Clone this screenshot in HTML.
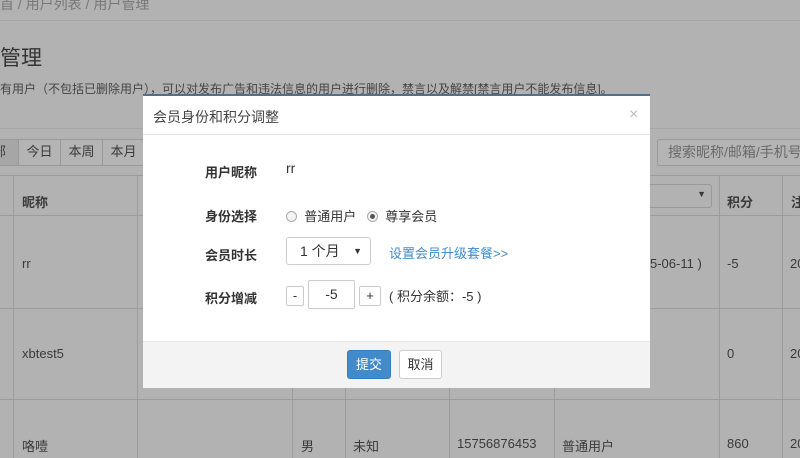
<!DOCTYPE html>
<html><head><meta charset="utf-8"><style>
*{margin:0;padding:0;box-sizing:border-box}
body{width:800px;height:458px;overflow:hidden;background:#b2b2b2;font-family:"Liberation Sans","Noto Sans CJK SC",sans-serif;font-size:13px;color:#3a3a3a;position:relative}
.a{position:absolute;white-space:nowrap}
.hl{position:absolute;height:1px;background:#9c9c9c}
.vl{position:absolute;width:1px;background:#9c9c9c}
.btn{position:absolute;border:1px solid #999;background:#b4b4b4;text-align:center;line-height:24px;font-size:13px}
.m{position:absolute;left:143px;top:94px;width:507px;height:294px;background:#fff;border-top:2px solid #52708e;color:#333}
.lb{position:absolute;font-weight:bold;font-size:12px;left:62px}
.r{display:inline-block;width:11px;height:11px;border:1px solid #aaa;border-radius:50%;background:#f4f4f4;vertical-align:-1px;position:relative}
</style></head><body>
<div class="a" style="left:0;top:-6px;font-size:14px;color:#777">首 / 用户列表 / 用户管理</div>
<div class="hl" style="left:0;top:20px;width:800px;background:#a5a5a5"></div>
<div class="a" style="left:0;top:42px;font-size:21px;color:#333">管理</div>
<div class="a" style="left:0;top:80px;font-size:12px;color:#444">有用户（不包括已删除用户），可以对发布广告和违法信息的用户进行删除，禁言以及解禁[禁言用户不能发布信息]。</div>
<div class="hl" style="left:0;top:128px;width:800px;background:#a5a5a5"></div>
<div class="btn" style="left:-20px;top:139px;width:39px;height:27px;background:#a6a6a6">部</div>
<div class="btn" style="left:18px;top:139px;width:43px;height:27px">今日</div>
<div class="btn" style="left:60px;top:139px;width:43px;height:27px">本周</div>
<div class="btn" style="left:102px;top:139px;width:43px;height:27px">本月</div>
<div class="btn" style="left:657px;top:139px;width:160px;height:27px;border-radius:3px;text-align:left;padding-left:10px;color:#6a6a6a;font-size:14px">搜索昵称/邮箱/手机号</div>
<div class="hl" style="left:0;top:175px;width:800px"></div>
<div class="hl" style="left:0;top:215px;width:800px"></div>
<div class="hl" style="left:0;top:308px;width:800px"></div>
<div class="hl" style="left:0;top:399px;width:800px"></div>
<div class="vl" style="left:13px;top:175px;height:283px"></div>
<div class="vl" style="left:137px;top:175px;height:283px"></div>
<div class="vl" style="left:292px;top:388px;height:70px"></div>
<div class="vl" style="left:345px;top:388px;height:70px"></div>
<div class="vl" style="left:449px;top:388px;height:70px"></div>
<div class="vl" style="left:554px;top:388px;height:70px"></div>
<div class="vl" style="left:719px;top:175px;height:283px"></div>
<div class="vl" style="left:782px;top:175px;height:283px"></div>
<div class="a" style="left:22px;top:192px;font-weight:bold">昵称</div>
<div class="a" style="left:727px;top:192px;font-weight:bold">积分</div>
<div class="a" style="left:791px;top:192px;font-weight:bold">注</div>
<div class="a" style="left:640px;top:184px;width:72px;height:24px;border:1px solid #999;border-radius:3px;font-size:9px;text-align:right;padding-right:5px;line-height:18px">▼</div>
<div class="a" style="left:22px;top:256px">rr</div>
<div class="a" style="left:650px;top:256px;font-size:13px">5-06-11 )</div>
<div class="a" style="left:727px;top:256px">-5</div>
<div class="a" style="left:790px;top:256px">20</div>
<div class="a" style="left:22px;top:346px">xbtest5</div>
<div class="a" style="left:727px;top:346px">0</div>
<div class="a" style="left:790px;top:346px">20</div>
<div class="a" style="left:22px;top:436px">咯噎</div>
<div class="a" style="left:301px;top:436px">男</div>
<div class="a" style="left:353px;top:436px">未知</div>
<div class="a" style="left:457px;top:436px">15756876453</div>
<div class="a" style="left:562px;top:436px">普通用户</div>
<div class="a" style="left:727px;top:436px">860</div>
<div class="a" style="left:790px;top:436px">20</div>

<div class="m">
<div class="a" style="left:10px;top:11px;font-size:14px;color:#444">会员身份和积分调整</div>
<div class="a" style="left:486px;top:10px;font-size:16px;color:#bbb">×</div>
<div class="hl" style="left:0;top:38px;width:507px;background:#e5e5e5"></div>
<div class="lb" style="top:66px;font-size:13px">用户昵称</div>
<div class="a" style="left:143px;top:64px;font-size:14px">rr</div>
<div class="lb" style="top:110px;font-size:13px">身份选择</div>
<div class="a" style="left:143px;top:110px;font-size:13px"><span class="r"></span>&nbsp; 普通用户 &nbsp;&nbsp;<span class="r"><span style="position:absolute;left:2px;top:2px;width:5px;height:5px;border-radius:50%;background:#555"></span></span>&nbsp; 尊享会员</div>
<div class="lb" style="top:149px;font-size:13px">会员时长</div>
<div class="a" style="left:143px;top:141px;width:85px;height:28px;border:1px solid #ccc;border-radius:3px;padding-left:13px;line-height:26px;font-size:14px">1 个月<span style="position:absolute;right:8px;top:0;font-size:9px">▼</span></div>
<div class="a" style="left:246px;top:147px;color:#428bca;font-size:13px">设置会员升级套餐&gt;&gt;</div>
<div class="lb" style="top:192px;font-size:13px">积分增减</div>
<div class="a" style="left:143px;top:190px;width:18px;height:20px;border:1px solid #ccc;border-radius:2px;text-align:center;line-height:18px">-</div>
<div class="a" style="left:165px;top:184px;width:47px;height:29px;border:1px solid #ccc;border-radius:2px;text-align:center;line-height:27px;font-size:14px">-5</div>
<div class="a" style="left:216px;top:190px;width:22px;height:20px;border:1px solid #ccc;border-radius:2px;text-align:center;line-height:18px">+</div>
<div class="a" style="left:246px;top:190px;font-size:13px">( 积分余额：-5 )</div>
<div class="a" style="left:0;top:245px;width:507px;height:47px;background:#f3f3f3;border-top:1px solid #e5e5e5"></div>
<div class="a" style="left:204px;top:254px;width:44px;height:29px;background:#428bca;border:1px solid #357ebd;border-radius:3px;color:#fff;text-align:center;line-height:27px">提交</div>
<div class="a" style="left:256px;top:254px;width:43px;height:29px;background:#fff;border:1px solid #ccc;border-radius:3px;text-align:center;line-height:27px">取消</div>
</div>
</body></html>
